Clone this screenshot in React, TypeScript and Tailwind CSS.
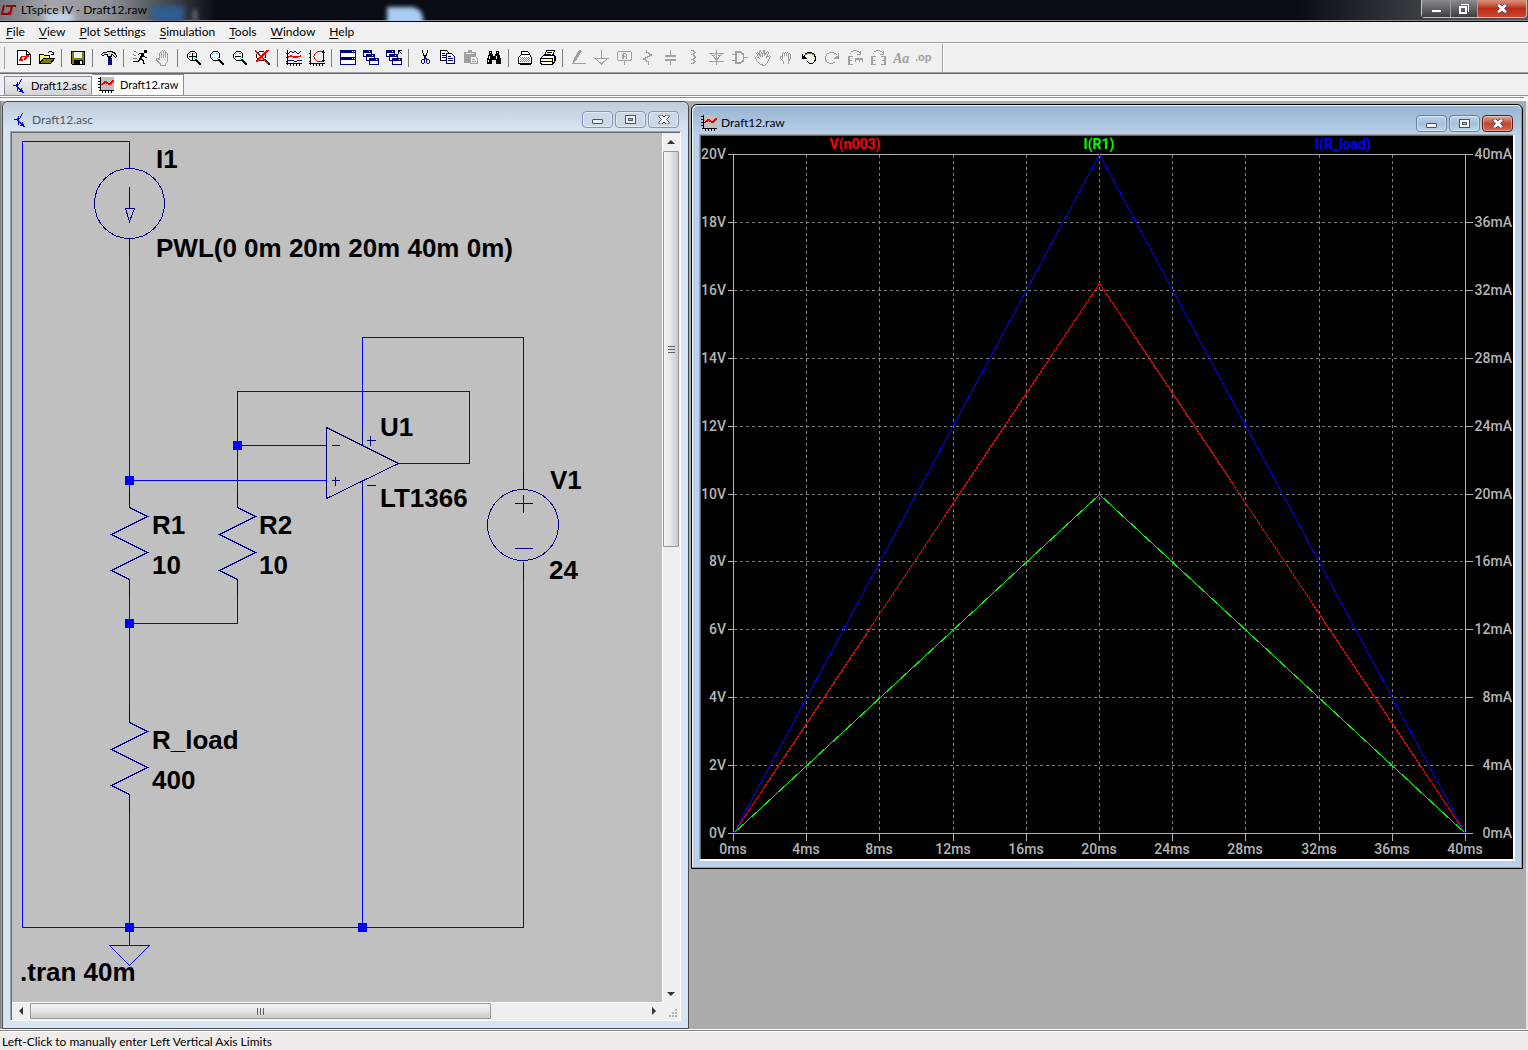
import React from 'react';
import { clsx } from 'clsx';

const UI_FONT = "font-['Lato','Open_Sans',sans-serif]";

type IconProps = { children: React.ReactNode; className?: string };

function Glyph({ children, className }: IconProps) {
  return (
    <svg viewBox="0 0 16 16" shapeRendering="crispEdges" fill="none" stroke="currentColor" aria-hidden="true" className={clsx('block w-4 h-4 shrink-0', className)}>
      {children}
    </svg>
  );
}

const TransistorIcon = () => (
  <Glyph className="text-[#0000ff]">
    <path d="M6.500 4v9M2 7.500h5M7 6.500h1M8 5.500h1M8 4.500h1M9 3.500h1M9 2.500h1M10 1.500h1M7 9.500h1M7 10.500h2M8 11.500h2M10.500 10v4M9 12.500h3M8 13.500h4M11 14.500h2" />
    <path d="M5.500 6v3" />
  </Glyph>
);

const WaveIcon = () => (
  <Glyph>
    <rect x="3" y="0" width="13" height="13" fill="#c0c0c0" stroke="none" />
    <path d="M2.500 0v14M1 13.500h15M0 1.500h2M0 4.500h2M0 7.500h2M0 10.500h2M4.500 14v2M7.500 14v2M10.500 14v2M13.500 14v2" stroke="#000" />
    <path d="M3 7.500h2M4 6.500h3M5 5.500h5M6 4.500h3M8 6.500h6M10 7.500h3M12 5.500h3M13 4.500h3M14 3.500h2" stroke="#f00" />
  </Glyph>
);

const Lens = ({ children }: { children?: React.ReactNode }) => (
  <>
    <path d="M4 1.500h5M4 10.500h5M1.500 4v4M10.500 4v4M2 3.500h1M3 2.500h1M9 2.500h1M10 3.500h.5M2 8.500h1M3 9.500h1M9 9.500h1" stroke="#000" />
    <circle cx="6" cy="6" r="4" fill="#f4fefe" stroke="none" />
    <path d="M3 4.500h1M4 3.500h1M8 8.500h1M9 7.500h1M7 3.500h2M3 7.500h1" stroke="#00e5e5" />
    <path d="M10 10l5 5" stroke="#000" strokeWidth="2" />
    {children}
  </>
);

const Cascade = () => (
  <>
    <path d="M.5 .5h8v6h-8zM3.500 4.500h8v6h-8zM6.500 8.500h9v6h-9z" fill="#fff" stroke="#000080" />
    <path d="M0 1.500h9M3 5.500h9M6 9.500h10" stroke="#000080" strokeWidth="2" />
    <path d="M6 1.500h2M9 5.500h2M13 9.500h2" stroke="#fff" strokeDasharray="1 1" />
  </>
);

type Tool = { label: string; off?: boolean; icon: React.ReactNode };

const TOOLS: (Tool | null)[] = [
  {
    label: 'New schematic',
    icon: (
      <>
        <path d="M1.500 .5h9l4 4v10h-13z" fill="#fff" stroke="#000" />
        <path d="M10.500 .5v4h4" stroke="#000" />
        <path d="M4 7.500h2M4 8.500h2M3 9.500h4M3 10.500h4M6 6.500h7M9 7.500h2M8 8.500h3M8 9.500h2M5 6.500h1M10 5.500h3" stroke="#f00" />
      </>
    ),
  },
  {
    label: 'Open',
    icon: (
      <>
        <path d="M.5 13.500v-9h4l1 1h5v3" fill="#ffff80" stroke="#000" />
        <path d="M.5 13.500l4-5h11l-4 5z" fill="#808000" stroke="#000" />
        <path d="M9 2.500h1M10 1.500h3M13 2.500h1M14 3.500h1M12 4.500h3M14.500 2v3" stroke="#000" />
      </>
    ),
  },
  null,
  {
    label: 'Save',
    icon: (
      <>
        <path d="M1.500 1.500h13v13h-12l-1-1z" fill="#808000" stroke="#000" />
        <rect x="4" y="2" width="8" height="6" fill="#efefef" stroke="none" />
        <rect x="4" y="10" width="9" height="4" fill="#000" stroke="none" />
        <rect x="10" y="11" width="2" height="3" fill="#efefef" stroke="none" />
      </>
    ),
  },
  null,
  {
    label: 'Control panel',
    icon: (
      <>
        <path d="M.5 4.500l2-2h3l1-1h4l4 2 1 3-1 1-3-3h-1v2h-4v-2h-3l-1 1h-1z" fill="#d8d8d8" stroke="#000" />
        <path d="M8.500 7v3" stroke="#000" strokeWidth="3" />
        <path d="M8.500 8v7" stroke="#000080" strokeWidth="4" />
        <path d="M8.500 9v6" stroke="#00f" />
      </>
    ),
  },
  null,
  {
    label: 'Run',
    icon: (
      <>
        <rect x="12" y="0" width="3" height="3" fill="#000" stroke="none" />
        <path d="M7 3.500h5M6 4.500h1M9 4.500h3M9 5.500h3M8 6.500h5M8 7.500h2M13 7.500h2M7 8.500h3M7 9.500h4M6 10.500h2M10 10.500h2M5 11.500h2M11 11.500h1M1 11.500h4M11 12.500h1M11 13.500h2" stroke="#000" />
        <path d="M2 1.500h2M4 2.500h1M1 4.500h1M2 5.500h2M1 8.500h4" stroke="#808080" />
      </>
    ),
  },
  {
    label: 'Halt',
    off: true,
    icon: <path d="M4.500 10V3.500l1-1 1 1V8M6.500 8V1.500l1-1 1 1V8M8.500 8V1.500l1-1 1 1V8M10.500 8V3.500l1-1 1 1V11l-2 3v1h-5v-1l-4-4v-2h1l2 2" />,
  },
  null,
  { label: 'Zoom in', icon: <Lens><path d="M3 6.500h7M6.500 3v7" stroke="#000" /></Lens> },
  { label: 'Pan', icon: <Lens /> },
  { label: 'Zoom back', icon: <Lens><path d="M3 6.500h6" stroke="#000" /></Lens> },
  {
    label: 'Zoom full extents',
    icon: <Lens><path d="M0 1l13 12M13 0L1 12" stroke="#f00" strokeWidth="1.500" /></Lens>,
  },
  null,
  {
    label: 'Autorange',
    icon: (
      <>
        <path d="M1.500 0v15M0 13.500h16M0 3.500h1M0 7.500h1M0 11.500h1M4.500 14v2M7.500 14v2M10.500 14v2M13.500 14v2" stroke="#000" />
        <path d="M2 4l3-3 2 2 2-2 3 3 3-3M2 10h5l1 1h3l1-1h4" stroke="#000080" />
        <path d="M2 7l3-1 3 1h3l4-1" stroke="#f00" strokeWidth="1.500" />
      </>
    ),
  },
  {
    label: 'Pick visible traces',
    icon: (
      <>
        <path d="M1.500 0v15M0 13.500h16M0 3.500h1M0 7.500h1M0 11.500h1M4.500 14v2M7.500 14v2M10.500 14v2M13.500 14v2" stroke="#000" />
        <path d="M8 1.500h6M7 2.500h1M6 3.500h1M5.500 4v2M4 6.500h1M5.500 7v2M6 9.500h1M7 10.500h1M8 11.500h6" stroke="#f00" />
        <path d="M14.500 0v12M13 2.500h3M13 10.500h3" stroke="#000" />
      </>
    ),
  },
  null,
  {
    label: 'Tile windows',
    icon: (
      <>
        <path d="M.5 .5h15v14H.500z" fill="#fff" stroke="#000080" />
        <path d="M0 1.500h16M0 8.500h16" stroke="#000080" strokeWidth="3" />
        <path d="M12 1.500h3M12 8.500h3" stroke="#fff" strokeDasharray="1 1" />
      </>
    ),
  },
  { label: 'Cascade windows', icon: <Cascade /> },
  {
    label: 'Close all windows',
    icon: (
      <>
        <Cascade />
        <path d="M12 .5h4M12.500 0v4M13 1l3 3" stroke="#000" />
      </>
    ),
  },
  null,
  {
    label: 'Cut',
    icon: (
      <>
        <path d="M5.500 0v3M6.500 3v3M7.500 5v4M10.500 0v3M9.500 3v3M8.500 5v4" stroke="#000" />
        <path d="M5 9.500h2M7.500 8v3M4.500 10v3M5 13.500h2M7.500 11v2M9 8.500h1M9 9.500h2M9.500 10v3M10 13.500h2M12.500 10v3M11 9.500h1" stroke="#000080" />
      </>
    ),
  },
  {
    label: 'Copy',
    icon: (
      <>
        <path d="M.5 .5h6l2 2v8h-8z" fill="#fff" stroke="#000" />
        <path d="M2 3.500h3M2 5.500h5M2 7.500h5" stroke="#000" />
        <path d="M6.500 3.500h5l3 3v7h-8z" fill="#fff" stroke="#000080" />
        <path d="M8 6.500h3M8 8.500h5M8 10.500h5" stroke="#000080" />
      </>
    ),
  },
  {
    label: 'Paste',
    off: true,
    icon: (
      <>
        <path d="M1 2h4V0h4v2h4v11H1z" fill="currentColor" stroke="none" />
        <path d="M3 3.500h8" stroke="#efefef" />
        <path d="M7.500 6.500h5l2 2v5h-7z" fill="#efefef" />
        <path d="M9 9.500h3M9 11.500h4" />
      </>
    ),
  },
  {
    label: 'Find',
    icon: (
      <>
        <path d="M3 1h3v3h1v2h2V4h1V1h3v3l2 5v5h-5v-4H6v4H1V9l2-5z" fill="#000" stroke="none" />
        <path d="M4.500 2v1M11.500 2v1M3.500 6v3M10.500 6v3M2.500 10v2" stroke="#fff" />
      </>
    ),
  },
  null,
  {
    label: 'Print setup',
    icon: (
      <>
        <path d="M4.500 5V1.500h6l2 2V5M1.500 7.500l3-3h8l2 3v6h-13z" fill="#fff" stroke="#000" />
        <path d="M3 7.500h10M4 8.500h10M3 9.500h10M4 10.500h10M3 11.500h10" stroke="#808080" strokeDasharray="1 1" />
        <path d="M3 14.500h11" stroke="#000" />
      </>
    ),
  },
  {
    label: 'Print',
    icon: (
      <>
        <path d="M4.500 6l2-5.500h8L12.500 6M.5 8.500l3-3h10l2 1v4l-3 4h-11l-1-2z" fill="#fff" stroke="#000" />
        <path d="M7 2.500h5M6 4.500h5M1 8.500h11M1 11.500h11M12.500 8v6M14.500 7v5" stroke="#000" />
        <path d="M8 10.500h3" stroke="#ff0" />
      </>
    ),
  },
  null,
  {
    label: 'Wire',
    off: true,
    icon: (
      <>
        <path d="M8 0l3 1-6 10-3 2 1-5z" fill="currentColor" stroke="none" />
        <path d="M1 13.500h14" />
      </>
    ),
  },
  { label: 'Ground', off: true, icon: <path d="M7.500 0v8M0 8.500h15M2 9l5.500 5L13 9" /> },
  {
    label: 'Label net',
    off: true,
    icon: (
      <>
        <path d="M1 1.500h13M.5 2v8M14.500 2v8M1 10.500h13M7.500 11v4" />
        <path d="M5.500 9V4M6.500 9V4M9.500 9V4M6 3.500h3M6 6.500h3" />
      </>
    ),
  },
  { label: 'Resistor', off: true, icon: <path d="M6.500 0v2l5 3-8 4 5 3v3" strokeWidth="1.500" /> },
  { label: 'Capacitor', off: true, icon: <path d="M7.500 0v5M2 5.500h11M2 6.500h11M2 9.500h11M2 10.500h11M7.500 10v5" /> },
  { label: 'Inductor', off: true, icon: <path d="M5 .5h3M7 1.500h2M8 2.500h2M7 3.500h2M5 4.500h3M7 5.500h2M8 6.500h2M8 7.500h2M7 8.500h2M5 9.500h3M7 10.500h2M8 11.500h2M7 12.500h2M5 13.500h3" /> },
  { label: 'Diode', off: true, icon: <path d="M7.500 0v15M0 3.500h15M2 4l5.500 6L13 4M4 5.500h2M9 5.500h2M0 11.500h15" /> },
  { label: 'Component', off: true, icon: <path d="M4 2h4l3 2 1 3.500-1 3.500-3 2H4zM0 4.500h4M0 10.500h4M12 7.500h4" strokeWidth="1.500" /> },
  {
    label: 'Move',
    off: true,
    icon: <path d="M5.500 14.500L1.500 10.500 .5 7.500l1-1 3 2-3-5 1-1 3 4-1-5 1-1 2 5 1-5h1v5l3-4 1 1-2 5 3-2 1 1-3 5v1l-3 3z" />,
  },
  { label: 'Drag', off: true, icon: <path d="M5.500 13.500v-2l-3-3V6.500h2v2M4.500 7V3.500l1-1 1 1V6M6.500 3.500l1-1 1 1V6M8.500 3.500l1-1 1 1V6M10.500 4.500l1-1 1 1v4l-2 3v2z" /> },
  {
    label: 'Undo',
    icon: (
      <>
        <path d="M5 3.500h7M4 4.500h2M11 4.500h2" stroke="#808000" />
        <path d="M6 2.500h5M4 3.500h2M11 3.500h2M13 4.500h1M13.500 5v2M14.500 6v5M13.500 10v2M12 12.500h1M8 13.500h4M7 12.500h1M6 11.500h1" stroke="#000" />
        <path d="M1.500 4v5M1 8.500h5M2 7.500h3M2 6.500h2M3 5.500h1" stroke="#000" />
      </>
    ),
  },
  {
    label: 'Redo',
    off: true,
    icon: <path d="M5 2.500h5M3 3.500h2M10 3.500h2M2.500 4v2M1.500 6v5M2.500 10v2M3 12.500h2M5 13.500h4M9 12.500h2M12 4.500h1M14.500 3v6M10 8.500h5M11 7.500h3M12 6.500h2" />,
  },
  {
    label: 'Rotate',
    off: true,
    icon: <path d="M1.500 6v9M2.500 6v9M1 6.500h5M1 10.500h4M1 14.500h5M8 8.500h8M8 9.500h8M8.500 8v4M12.500 8v4M15.500 8v4M3 3.500h1M4 1.500h2M6 .5h4M10 1.500h2M12 2.500h1M10 4.500h4M13.500 1v4" />,
  },
  {
    label: 'Mirror',
    off: true,
    icon: <path d="M1.500 6v9M2.500 6v9M1 6.500h5M1 10.500h4M1 14.500h5M15.500 6v9M14.500 6v9M11 6.500h5M12 10.500h4M11 14.500h5M3 3.500h1M4 1.500h2M6 .5h4M10 1.500h2M12 2.500h1M10 4.500h4M13.500 1v4" />,
  },
  {
    label: 'Text',
    off: true,
    icon: <text x="0" y="13" fill="currentColor" stroke="none" className="font-['Liberation_Serif',serif] text-[14px] font-bold italic">Aa</text>,
  },
  {
    label: 'SPICE directive',
    off: true,
    icon: <text x="-1" y="11" fill="currentColor" stroke="none" className="font-['Liberation_Sans',sans-serif] text-[11px] font-bold">.op</text>,
  },
];

const MENU = ['File', 'View', 'Plot Settings', 'Simulation', 'Tools', 'Window', 'Help'];

function TitleBar() {
  return (
    <header className="relative flex h-[22px] shrink-0 items-start justify-between overflow-hidden border-b border-black bg-[linear-gradient(90deg,#74777c_0px,#a4a6aa_50px,#8d9096_110px,#5a5d63_150px,#0a0d16_215px,#0a0d16_1300px,#3a3d42_1420px,#55585c_100%)] shadow-[inset_0_-1px_0_#8c8c90]">
      <span className="absolute left-[45px] top-[12px] h-3 w-7 bg-[#c4d4ea] blur-[3px]" />
      <span className="absolute left-[152px] top-[6px] h-4 w-8 bg-[#2f5f92] blur-[3px]" />
      <span className="absolute left-[193px] top-[10px] h-3 w-1 bg-[#6c7078] blur-[2px]" />
      <span className="absolute left-[387px] top-[7px] h-5 w-9 rounded-tr-xl bg-[#a9cdf2] blur-[2px]" />
      <div className="relative flex h-5 items-center gap-[5px]">
        <svg viewBox="0 0 16 12" className="h-3 w-4" fill="none" stroke="#a00000" strokeWidth="2" aria-hidden="true">
          <path d="M4 1L2 10h6l1-2M6 2h10M12 2L10 11" />
        </svg>
        <h1 className="leading-5 text-black">LTspice IV - Draft12.raw</h1>
      </div>
      <div className="relative mr-px flex h-[18px] rounded-b border border-t-0 border-[#c4c4c6] text-white">
        <button aria-label="Minimize" className="flex w-[29px] items-center justify-center border-r border-[#a0a0a4] bg-gradient-to-b from-[#8a8c90] to-[#3c3e44]">
          <span className="mt-1 h-1 w-[11px] border border-[#555a6c] bg-white" />
        </button>
        <button aria-label="Restore" className="flex w-[27px] items-center justify-center border-r border-[#a0a0a4] bg-gradient-to-b from-[#8a8c90] to-[#3c3e44]">
          <svg viewBox="0 0 12 12" className="h-3 w-3" shapeRendering="crispEdges" fill="none" stroke="#fff" aria-hidden="true">
            <path d="M3 1.500h7.500V9" />
            <rect x="2" y="4" width="6" height="6" strokeWidth="2" />
          </svg>
        </button>
        <button aria-label="Close" className="flex w-12 items-center justify-center rounded-br bg-gradient-to-b from-[#d8917f] via-[#b92c12] to-[#d0442c]">
          <CloseMark />
        </button>
      </div>
    </header>
  );
}

function CloseMark() {
  return (
    <svg viewBox="0 0 12 9" className="h-[9px] w-3" fill="none" aria-hidden="true">
      <path d="M1 0h3l2 2 2-2h3v2L8.500 4.500 11 7v2H8L6 7 4 9H1V7l2.500-2.500L1 2z" fill="#fff" stroke="#4d5267" />
    </svg>
  );
}

function ChildControls({ active }: { active?: boolean }) {
  const base = clsx(
    'flex h-[17px] w-[31px] items-center justify-center rounded-sm border shadow-[inset_0_0_0_1px_#ffffff70]',
    active
      ? 'border-[#6580a5] bg-gradient-to-b from-[#c0d4ea] via-[#a5bfdb] to-[#bdd5ee]'
      : 'border-[#8594b4] bg-[#cbd8e7]'
  );
  return (
    <div className="flex gap-[2px]">
      <button aria-label="Minimize" className={base}>
        <span className="mt-1 h-[5px] w-[11px] rounded-[1px] border border-[#4d5267] bg-[#f0f0f0]" />
      </button>
      <button aria-label="Maximize" className={base}>
        <svg viewBox="0 0 11 9" className="h-[9px] w-[11px]" shapeRendering="crispEdges" aria-hidden="true">
          <rect x=".5" y=".5" width="10" height="8" fill="#f4f4f4" stroke="#4d5267" />
          <rect x="3.500" y="3.500" width="4" height="2" fill="#a5bfdb" stroke="#4d5267" />
        </svg>
      </button>
      <button
        aria-label="Close"
        className={clsx(
          'flex h-[17px] w-[31px] items-center justify-center rounded-sm border shadow-[inset_0_0_0_1px_#ffffff60]',
          active ? 'border-[#5a1a20] bg-gradient-to-b from-[#e3a49a] via-[#c04630] to-[#cf6a50]' : 'border-[#8594b4] bg-[#cbd8e7]'
        )}
      >
        <CloseMark />
      </button>
    </div>
  );
}

function Scrollbars({ children }: { children: React.ReactNode }) {
  return (
    <div className="grid min-h-0 flex-1 grid-cols-[minmax(0,1fr)_18px] grid-rows-[minmax(0,1fr)_18px] bg-[#f0f0f0]">
      <div className="min-h-0 overflow-hidden bg-[#c0c0c0]">{children}</div>
      <div className="flex flex-col items-start border-l border-white bg-[#efefef]">
        <div className="flex h-[18px] items-center pl-1">
          <svg viewBox="0 0 8 4" className="h-1 w-2" fill="#333" aria-hidden="true"><path d="M0 4l4-4 4 4z" /></svg>
        </div>
        <div className="flex min-h-0 w-full flex-1 flex-col">
          <div className="flex w-4 flex-[9] flex-col items-center justify-center gap-[2px] rounded-[1px] border border-[#979797] bg-gradient-to-r from-[#f5f5f5] via-[#e4e4e6] to-[#cacacc]">
            <span className="h-px w-[7px] bg-[#606060]" />
            <span className="h-px w-[7px] bg-[#606060]" />
            <span className="h-px w-[7px] bg-[#606060]" />
          </div>
          <div className="flex-[10]" />
        </div>
        <div className="flex h-[17px] items-center pl-1">
          <svg viewBox="0 0 8 4" className="h-1 w-2" fill="#333" aria-hidden="true"><path d="M0 0l4 4 4-4z" /></svg>
        </div>
      </div>
      <div className="flex items-start border-t border-white bg-[#efefef]">
        <div className="flex h-4 w-[18px] items-center justify-center">
          <svg viewBox="0 0 4 8" className="h-2 w-1" fill="#333" aria-hidden="true"><path d="M4 0L0 4l4 4z" /></svg>
        </div>
        <div className="min-w-0 flex-1">
          <div className="flex h-4 w-3/4 items-center justify-center gap-[2px] rounded-[1px] border border-[#979797] bg-gradient-to-b from-[#f5f5f5] via-[#e4e4e6] to-[#cacacc]">
            <span className="h-[7px] w-px bg-[#606060]" />
            <span className="h-[7px] w-px bg-[#606060]" />
            <span className="h-[7px] w-px bg-[#606060]" />
          </div>
        </div>
        <div className="flex h-4 w-[17px] items-center justify-center">
          <svg viewBox="0 0 4 8" className="h-2 w-1" fill="#333" aria-hidden="true"><path d="M0 0l4 4-4 4z" /></svg>
        </div>
      </div>
      <div className="flex items-end justify-end p-[3px]">
        <svg viewBox="0 0 8 8" className="h-2 w-2" fill="#b4b4b4" aria-hidden="true">
          <path d="M6 0h2v2H6zM3 3h2v2H3zM6 3h2v2H6zM0 6h2v2H0zM3 6h2v2H3zM6 6h2v2H6z" />
        </svg>
      </div>
    </div>
  );
}

const NODES = [[129, 480], [237, 445], [129, 623], [129, 927], [362, 927]];

const LABELS: [number, number, string][] = [
  [156, 168, 'I1'],
  [156, 257, 'PWL(0 0m 20m 20m 40m 0m)'],
  [380, 436, 'U1'],
  [380, 507, 'LT1366'],
  [550, 489, 'V1'],
  [549, 579, '24'],
  [152, 534, 'R1'],
  [152, 574, '10'],
  [259, 534, 'R2'],
  [259, 574, '10'],
  [152, 749, 'R_load'],
  [152, 789, '400'],
  [20, 981, '.tran 40m'],
];

function Schematic() {
  return (
    <svg viewBox="12 133 650 869" preserveAspectRatio="xMinYMin meet" className="block h-full w-full" role="img" aria-label="Schematic">
      <g transform="translate(.5 .5)" fill="none" strokeWidth="1" shapeRendering="crispEdges">
        {/* wires */}
        <path
          stroke="#0000ff"
          d="M129 150V141H22V927H523V579M129 256V489M129 480H308M237 489V391H469V463H416M237 445H308M362 427V337H523V471M362 499V927M129 597V705M237 597V623H129M129 812V945M109 945H149L129 965Z"
        />
        {/* symbols */}
        <g stroke="#000080">
          <circle cx="129" cy="203" r="35" />
          <path d="M129 150V168M129 186V208M125 208H134L129 221ZM129 238V256" />
          <path d="M129 489V507L147 516L111 534L147 552L111 570L129 579V597" />
          <path d="M237 489V507L255 516L219 534L255 552L219 570L237 579V597" />
          <path d="M129 704V722L147 731L111 749L147 767L111 785L129 794V812" />
          <path d="M326 427V498L398 463Z" />
          <path d="M362 427V445M362 481V499M331 445H339M331 480H339M335 476V485M366 440H375M370 435V445M366 485H375" />
          <circle cx="522.500" cy="524.500" r="35.500" />
          <path d="M523 471V489M523 561V579M514 503H532M523 494V512M514 548H532" />
        </g>
        <path stroke="#0000ff" d="M308 445H326M308 480H326M398 463H416" />
      </g>
      {NODES.map(([x, y]) => (
        <rect key={`${x}-${y}`} x={x - 4} y={y - 4} width="9" height="9" fill="#0000ff" />
      ))}
      {LABELS.map(([x, y, text]) => (
        <text key={`${x}-${y}`} x={x} y={y} className="fill-black font-['Liberation_Sans',Arial,sans-serif] text-[26px] font-bold">
          {text}
        </text>
      ))}
    </svg>
  );
}

const LEFT = 733;
const RIGHT = 1465;
const GRID_X = [733, 806, 879, 953, 1026, 1099, 1172, 1245, 1319, 1392, 1465];
const GRID_Y = [154, 222, 290, 358, 426, 494, 561, 629, 697, 765, 833];

function Plot() {
  return (
    <svg viewBox="701 136 812 723" className="block h-auto w-full bg-black" role="img" aria-label="Waveforms">
      <g transform="translate(.5 .5)" fill="none" shapeRendering="crispEdges">
        <g stroke="#808080" strokeDasharray="3 3">
          {GRID_X.slice(1, 10).map((x) => <path key={x} d={`M${x} 154V833`} />)}
          {GRID_Y.slice(1, 10).map((y) => <path key={y} d={`M${LEFT} ${y}H${RIGHT}`} />)}
        </g>
        <g stroke="#b4b4b4">
          <path d="M733 154H1465V833H733Z" />
          {GRID_X.map((x) => <path key={x} d={`M${x} 833V840`} />)}
          {GRID_Y.map((y) => <path key={y} d={`M727 ${y}H${LEFT}M${RIGHT} ${y}H1472`} />)}
        </g>
        <path d="M733 833L1099 283L1465 833" stroke="#ff0000" />
        <path d="M733 833L1099 494L1465 833" stroke="#00ff00" />
        <path d="M733 833L1099 154L1465 833" stroke="#0000ff" />
      </g>
      <g className="fill-[#b4b4b4] font-['Roboto',sans-serif] text-[14px] font-medium">
        {GRID_Y.map((y, i) => (
          <text key={y} x="726" y={y + 5} textAnchor="end">{20 - i * 2}V</text>
        ))}
        {GRID_Y.map((y, i) => (
          <text key={y} x="1512" y={y + 5} textAnchor="end">{40 - i * 4}mA</text>
        ))}
        {GRID_X.map((x, i) => (
          <text key={x} x={x} y="854" textAnchor="middle">{i * 4}ms</text>
        ))}
      </g>
      <g className="font-['Roboto',sans-serif] text-[14px] font-bold" textAnchor="middle">
        <text x="855" y="149" fill="#ff0000">V(n003)</text>
        <text x="1099" y="149" fill="#00ff00">I(R1)</text>
        <text x="1343" y="149" fill="#0000ff">I(R_load)</text>
      </g>
    </svg>
  );
}

export default function App() {
  return (
    <div className={clsx('flex h-screen flex-col overflow-hidden bg-[#f0f0f0] text-[12px] text-black', UI_FONT)}>
      <TitleBar />

      {/* Menu */}
      <nav className="flex h-[22px] shrink-0 items-start gap-[14px] border-b border-white pl-[6px] shadow-[inset_0_-1px_0_#a0a0a0]">
        {MENU.map((item) => (
          <button key={item} className="leading-5">
            <span className="underline underline-offset-2">{item[0]}</span>
            {item.slice(1)}
          </button>
        ))}
      </nav>

      {/* Toolbar */}
      <div role="toolbar" className="flex h-[30px] shrink-0 items-start border-b border-[#696969] shadow-[inset_0_-1px_0_#a0a0a0]">
        <span className="ml-1 mr-[7px] mt-[3px] h-[22px] w-px bg-[#a0a0a0]" />
        {TOOLS.map((tool, i) =>
          tool === null ? (
            <span key={i} className="mx-[3px] mt-[5px] h-[18px] w-[2px] border-l border-[#808080]" />
          ) : (
            <button key={tool.label} aria-label={tool.label} disabled={tool.off} className={clsx('mt-[6px] w-[23px] shrink-0 pl-1', tool.off ? 'text-[#a0a0a0]' : 'text-black')}>
              <Glyph>{tool.icon}</Glyph>
            </button>
          )
        )}
        <span className="ml-[7px] h-7 w-[2px] border-l border-[#a0a0a0] bg-white" />
      </div>

      {/* Document tabs */}
      <div role="tablist" className="flex h-[22px] shrink-0 items-end border-b border-[#8c8e9c] pl-1 text-[11px]">
        <button role="tab" aria-selected="false" className="flex h-[19px] w-[88px] items-center gap-1 whitespace-nowrap border border-b-0 border-[#8c8e9c] bg-gradient-to-b from-[#f2f2f2] to-[#d4d4d4] pl-[6px]">
          <TransistorIcon />
          Draft12.asc
        </button>
        <button role="tab" aria-selected="true" className="flex h-[21px] w-[92px] items-center gap-[6px] whitespace-nowrap border border-b-0 border-l-0 border-[#8c8e9c] bg-white pl-[6px]">
          <WaveIcon />
          Draft12.raw
        </button>
      </div>
      <div className="mr-1 h-[2px] shrink-0 border-b border-[#8c8e9c] bg-white" />
      <div className="h-[3px] shrink-0 bg-[#fafafa]" />

      {/* MDI client */}
      <main className="grid min-h-0 flex-1 grid-cols-[687fr_832fr] items-start gap-[2px] border-r-2 border-[#e3e3e3] bg-[#ababab] pl-[2px] pr-[3px] shadow-[inset_1px_0_0_#808080]">
        <section className="flex h-full min-h-0 flex-col rounded-t-md border border-[#46494e] bg-[#d7e4f2] px-[7px] pb-[7px] shadow-[inset_0_1px_0_#eef4fa]">
          <div className="-mx-[7px] flex h-[29px] shrink-0 items-center justify-between rounded-t-md bg-gradient-to-b from-[#bfcddb] to-[#d7e4f2] px-[9px] pt-[6px]">
            <div className="flex items-center gap-1 text-[#50565e]">
              <TransistorIcon />
              <h2>Draft12.asc</h2>
            </div>
            <ChildControls />
          </div>
          <div className="flex min-h-0 flex-1 border border-[#fafafa] border-l-[#a0a0a0] border-t-[#a0a0a0]">
            <div className="flex min-h-0 flex-1 flex-col border-l border-t border-[#696969]">
              <Scrollbars>
                <Schematic />
              </Scrollbars>
            </div>
          </div>
        </section>

        <section className="mt-[3px] rounded-t-md border border-black bg-[#b9d1ea] px-[7px] pb-[7px] shadow-[inset_-1px_-1px_0_#37c4dc,inset_1px_1px_0_#eef6fc]">
          <div className="-mx-[6px] mt-px flex h-7 items-center justify-between rounded-t-md bg-gradient-to-b from-[#99b4d1] to-[#b9d1ea] px-[8px] pt-[6px]">
            <div className="flex items-center gap-1">
              <WaveIcon />
              <h2>Draft12.raw</h2>
            </div>
            <ChildControls active />
          </div>
          <div className="border border-b-2 border-r-2 border-white border-l-[#a0a0a0] border-t-[#a0a0a0]">
            <div className="border-l border-t border-[#696969]">
              <Plot />
            </div>
          </div>
        </section>
      </main>

      <footer className="flex h-[21px] shrink-0 items-center border-t border-white bg-[#f0ecec] pl-[2px] pt-1 shadow-[inset_0_1px_0_#808080,inset_0_2px_0_#fff]">
        Left-Click to manually enter Left Vertical Axis Limits
      </footer>
    </div>
  );
}
